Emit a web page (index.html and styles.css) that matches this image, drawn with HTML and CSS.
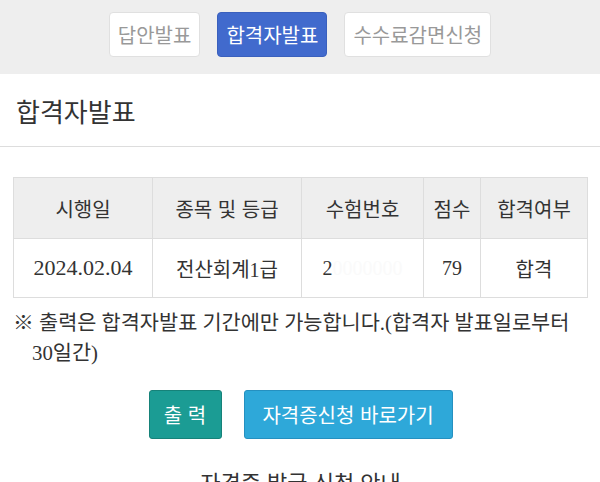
FILE: index.html
```html
<!DOCTYPE html>
<html lang="ko">
<head>
    <meta charset="UTF-8">
    <title>합격자발표</title>
    <link rel="stylesheet" href="styles.css">
</head>
<body>
    <div class="tabs">
        <a class="tab">답안발표</a>
        <a class="tab active">합격자발표</a>
        <a class="tab">수수료감면신청</a>
    </div>

    <div class="page-head">
        <h1>합격자발표</h1>
    </div>

    <div class="content">
        <table class="result">
            <colgroup>
                <col style="width: 139px">
                <col style="width: 149px">
                <col style="width: 122px">
                <col style="width: 57px">
                <col>
            </colgroup>
            <thead>
                <tr>
                    <th>시행일</th>
                    <th>종목 및 등급</th>
                    <th>수험번호</th>
                    <th>점수</th>
                    <th>합격여부</th>
                </tr>
            </thead>
            <tbody>
                <tr>
                    <td class="date">2024.02.04</td>
                    <td>전산회계1급</td>
                    <td>2<span class="masked">0000000</span></td>
                    <td>79</td>
                    <td>합격</td>
                </tr>
            </tbody>
        </table>

        <p class="note">※ 출력은 합격자발표 기간에만 가능합니다.(합격자 발표일로부터 30일간)</p>

        <div class="actions">
            <button class="btn btn-print">출 력</button>
            <button class="btn btn-apply">자격증신청 바로가기</button>
        </div>

        <p class="more">자격증 발급 신청 안내</p>
    </div>
</body>
</html>
```

FILE: styles.css
```css
body {
    margin: 0;
    font-family: 'Noto Sans CJK KR', sans-serif;
    background-color: white;
    color: #333;
    overflow: hidden;
}

/* 상단 탭 */
.tabs {
    background-color: #eeeeee;
    height: 74px;
    box-sizing: border-box;
    padding-top: 12px;
    display: flex;
    justify-content: center;
    align-items: flex-start;
    gap: 17px;
}

.tab {
    height: 45px;
    box-sizing: border-box;
    padding: 0 8px;
    display: flex;
    align-items: center;
    font-size: 20px;
    color: #999;
    background-color: white;
    border: 1px solid #e0e0e0;
    border-radius: 4px;
}

.tab.active {
    background-color: #416acd;
    border-color: #3a60bd;
    color: white;
}

/* 제목 */
.page-head {
    height: 73px;
    box-sizing: border-box;
    padding-left: 16px;
    display: flex;
    align-items: center;
    border-bottom: 1px solid #dddddd;
}

h1 {
    margin: 0;
    font-size: 26px;
    font-weight: normal;
    color: #333;
}

.content {
    padding: 30px 12px 0 13px;
}

/* 결과 표 */
.result {
    width: 575px;
    border-collapse: collapse;
    table-layout: fixed;
    font-family: 'Liberation Serif', 'Noto Sans CJK KR', serif;
    font-size: 20px;
    color: #333;
}

.result th,
.result td {
    border: 1px solid #dddddd;
    text-align: center;
    padding: 0;
    white-space: nowrap;
}

.result th {
    height: 60px;
    background-color: #eeeeee;
    font-family: 'Noto Sans CJK KR', sans-serif;
    font-size: 20px;
    font-weight: normal;
}

.result td {
    height: 58px;
    font-weight: normal;
}

.result td.date {
    font-size: 22px;
}

.masked {
    color: #fafafa;
}

/* 안내 문구 */
.note {
    margin: 10px 0 0 0;
    padding-left: 19px;
    text-indent: -19px;
    font-family: 'Liberation Serif', 'Noto Sans CJK KR', serif;
    font-size: 20.8px;
    line-height: 30px;
    word-break: keep-all;
}

/* 버튼 */
.actions {
    margin-top: 22px;
    display: flex;
    justify-content: center;
    gap: 22px;
}

.btn {
    height: 49px;
    padding: 0 12px;
    font-family: 'Noto Sans CJK KR', sans-serif;
    font-size: 20px;
    color: white;
    border-radius: 3px;
    cursor: pointer;
}

.btn-print {
    width: 73px;
    background-color: #1b9c94;
    border: 1px solid #168279;
}

.btn-apply {
    width: 209px;
    background-color: #2ea8d9;
    border: 1px solid #2590c0;
}

.more {
    margin: 27px 0 0 0;
    text-align: center;
    font-size: 22px;
    line-height: 30px;
    color: #333;
}
```
